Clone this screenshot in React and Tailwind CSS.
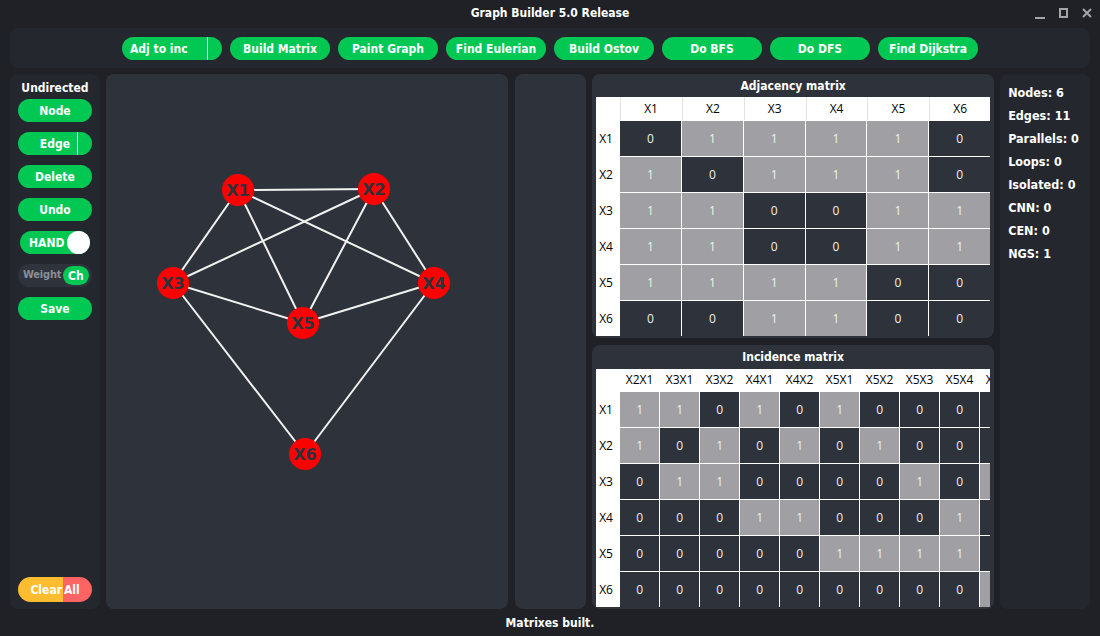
import React from 'react';

const UI = "font-['DejaVu_Sans_Condensed','Liberation_Sans',sans-serif]";
const TBL = "font-['Open_Sans','Liberation_Sans',sans-serif]";

const labels = ['X1', 'X2', 'X3', 'X4', 'X5', 'X6'];

const adj = [
  [0, 1, 1, 1, 1, 0],
  [1, 0, 1, 1, 1, 0],
  [1, 1, 0, 0, 1, 1],
  [1, 1, 0, 0, 1, 1],
  [1, 1, 1, 1, 0, 0],
  [0, 0, 1, 1, 0, 0],
];

const edges = [
  ['X2', 'X1'], ['X3', 'X1'], ['X3', 'X2'], ['X4', 'X1'], ['X4', 'X2'], ['X5', 'X1'],
  ['X5', 'X2'], ['X5', 'X3'], ['X5', 'X4'], ['X6', 'X3'], ['X6', 'X4'],
];

const pos = {
  X1: [132, 116],
  X2: [268, 115],
  X3: [67, 209],
  X4: [328, 209],
  X5: [197, 249],
  X6: [199, 380],
};

const tools = ['Build Matrix', 'Paint Graph', 'Find Eulerian', 'Build Ostov', 'Do BFS', 'Do DFS', 'Find Dijkstra'];

const stats = ['Nodes: 6', 'Edges: 11', 'Parallels: 0', 'Loops: 0', 'Isolated: 0', 'CNN: 0', 'CEN: 0', 'NGS: 1'];

const Pill = ({ children, className = '' }) => (
  <div className={`h-[23px] rounded-full bg-[#00c853] text-white font-bold text-[12px] flex items-center justify-center ${className}`}>
    {children}
  </div>
);

const Cell = ({ v }) => (
  <div className={`flex items-center justify-center text-[12px] ${v ? 'bg-[#a09fa4] text-[#eef5ea]' : 'bg-[#2e333b] text-[#f4f1e8]'}`}>
    {v}
  </div>
);

const Graph = () => (
  <svg width="403" height="535" className="block">
    {edges.map(([a, b]) => (
      <line key={a + b} x1={pos[a][0]} y1={pos[a][1]} x2={pos[b][0]} y2={pos[b][1]} stroke="#f2f2f2" strokeWidth="2" />
    ))}
    {labels.map((l) => (
      <g key={l}>
        <circle cx={pos[l][0]} cy={pos[l][1]} r="16" fill="#ff0000" />
        <text
          x={pos[l][0]}
          y={pos[l][1] + 6}
          textAnchor="middle"
          fontFamily="DejaVu Sans, sans-serif"
          fontWeight="bold"
          fontSize="16"
          fill="#2e333b"
        >
          {l}
        </text>
      </g>
    ))}
  </svg>
);

export default function App() {
  return (
    <div className={`w-[1100px] h-[636px] bg-[#1f2126] flex flex-col overflow-hidden ${UI}`}>
      {/* title bar */}
      <div className="relative h-[28px] flex items-center justify-center">
        <span className="text-white font-bold text-[12px] -mt-[2px]">Graph Builder 5.0 Release</span>
        <div className="absolute right-[8px] top-[7px] flex items-center gap-[14px]">
          <div className="w-[10px] h-[2px] bg-[#a5a5a8] mt-[10px]" />
          <div className="w-[9px] h-[10px] border-2 border-[#a5a5a8]" />
          <svg width="10" height="10" viewBox="0 0 10 10">
            <path d="M1 1L9 9M9 1L1 9" stroke="#a5a5a8" strokeWidth="2" />
          </svg>
        </div>
      </div>

      {/* toolbar */}
      <div className="mx-[10px] h-[40px] rounded-[8px] bg-[#24272e] flex items-center justify-center gap-[8px] pt-[1px]">
        <Pill className="w-[100px] relative !justify-start pl-[8px]">
          Adj to inc
          <span className="absolute left-[85px] top-0 h-full w-[1px] bg-white" />
        </Pill>
        {tools.map((t) => (
          <Pill key={t} className="w-[100px]">{t}</Pill>
        ))}
      </div>

      {/* main */}
      <div className="mt-[6px] mx-[10px] h-[535px] flex gap-[6px]">
        {/* left controls */}
        <div className="w-[90px] rounded-[8px] bg-[#24272e] flex flex-col items-center px-[8px] pt-[4px] pb-[7px]">
          <div className="text-white font-bold text-[12px] h-[20px] flex items-center">Undirected</div>
          <div className="w-full flex flex-col gap-[10px] mt-[1px]">
            <Pill>Node</Pill>
            <Pill className="relative">
              Edge
              <span className="absolute left-[59px] top-0 h-full w-[1px] bg-white" />
            </Pill>
            <Pill>Delete</Pill>
            <Pill>Undo</Pill>
            <div className="h-[23px] mx-[2px] rounded-full bg-[#00c853] flex items-center justify-between pl-[9px]">
              <span className="text-white font-bold text-[12px]">HAND</span>
              <span className="w-[23px] h-[23px] rounded-full bg-white" />
            </div>
            <div className="h-[23px] rounded-full bg-[#2f333b] flex items-center justify-between pl-[5px] pr-[3px]">
              <span className="text-[#8b8e94] font-bold text-[11px] tracking-[-0.2px]">Weight</span>
              <span className="h-[19px] w-[26px] rounded-full bg-[#00c853] text-white font-bold text-[12px] flex items-center justify-center">Ch</span>
            </div>
            <Pill>Save</Pill>
          </div>
          <div className="mt-auto w-full h-[25px] rounded-full overflow-hidden flex text-white font-bold text-[12px]">
            <div className="w-[45px] bg-[#fdbd2e] flex items-center justify-end pr-[1px]">Clear</div>
            <div className="flex-1 bg-[#ff6363] flex items-center pl-[1px]">All</div>
          </div>
        </div>

        {/* canvas */}
        <div className="w-[403px] rounded-[8px] bg-[#2e333b] overflow-hidden">
          <Graph />
        </div>

        {/* middle panel */}
        <div className="w-[71px] rounded-[8px] bg-[#2e333b] ml-[1px]" />

        {/* matrices */}
        <div className="w-[402px] flex flex-col gap-[7px]">
          <div className="h-[264px] rounded-[8px] bg-[#2e333b] px-[4px] flex flex-col">
            <div className="h-[23px] flex items-center justify-center text-white font-bold text-[12px]">Adjacency matrix</div>
            <div className={`grid grid-cols-[23px_repeat(6,1fr)] grid-rows-[23px_repeat(6,35px)] gap-px bg-white ${TBL}`}>
              <div className="bg-white" />
              {labels.map((l) => (
                <div key={l} className="bg-white text-black text-[12px] flex items-center justify-center border-l border-[#e2e2e2]">{l}</div>
              ))}
              {adj.map((row, i) => (
                <React.Fragment key={i}>
                  <div className="bg-white text-black text-[12px] flex items-center pl-[3px]">{labels[i]}</div>
                  {row.map((v, j) => <Cell key={j} v={v} />)}
                </React.Fragment>
              ))}
            </div>
          </div>

          <div className="h-[264px] rounded-[8px] bg-[#2e333b] px-[4px] flex flex-col">
            <div className="h-[24px] flex items-center justify-center text-white font-bold text-[12px]">Incidence matrix</div>
            <div className="w-[394px] overflow-hidden bg-white">
              <div className={`grid grid-cols-[23px_repeat(11,39px)] grid-rows-[22px_repeat(6,35px)] gap-px w-max bg-white ${TBL}`}>
                <div className="bg-white" />
                {edges.map(([a, b]) => (
                  <div key={a + b} className="bg-white text-black text-[12px] flex items-center justify-center">{a + b}</div>
                ))}
                {labels.map((l) => (
                  <React.Fragment key={l}>
                    <div className="bg-white text-black text-[12px] flex items-center pl-[3px]">{l}</div>
                    {edges.map(([a, b]) => (
                      <Cell key={a + b} v={a === l || b === l ? 1 : 0} />
                    ))}
                  </React.Fragment>
                ))}
              </div>
            </div>
          </div>
        </div>

        {/* stats */}
        <div className="w-[90px] rounded-[8px] bg-[#24272e] pl-[8px] pt-[8px] flex flex-col">
          {stats.map((s) => (
            <div key={s} className="h-[23px] flex items-center text-white font-bold text-[12.5px]">{s}</div>
          ))}
        </div>
      </div>

      {/* status */}
      <div className="flex-1 flex items-center justify-center">
        <span className="text-white font-bold text-[12px]">Matrixes built.</span>
      </div>
    </div>
  );
}
